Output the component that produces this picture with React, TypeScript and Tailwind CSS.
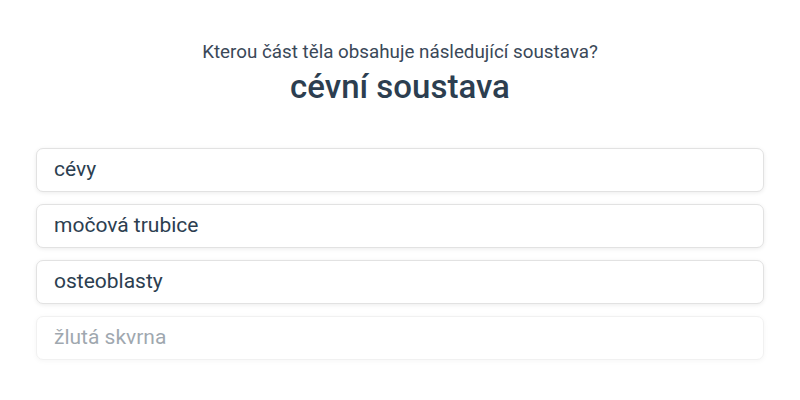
const options = ["cévy", "močová trubice", "osteoblasty", "žlutá skvrna"];

export default function App() {
  return (
    <div className="h-[400px] w-[800px] overflow-hidden bg-white font-[Roboto] text-[#3a4858]">
      <div className="flex flex-col items-center pt-[39px]">
        <p className="text-[18.8px] leading-[27px]">Kterou část těla obsahuje následující soustava?</p>
        <h1 className="mt-[1px] text-[33px] leading-[40px] font-medium text-[#2c3e50]">cévní soustava</h1>
      </div>

      <div className="mt-[41px] flex flex-col gap-[12px] px-[36px]">
        {options.map((o, i) => (
          <div
            key={o}
            className={
              i === 3
                ? "flex h-[44px] items-center rounded-[7px] border border-[#e2e2e2] bg-white px-[17px] text-[21px] text-[#2c3e50] opacity-45 shadow-[0_1px_4px_rgba(0,0,0,0.08)]"
                : "flex h-[44px] items-center rounded-[7px] border border-[#e2e2e2] bg-white px-[17px] text-[21px] text-[#2c3e50] shadow-[0_1px_4px_rgba(0,0,0,0.08)]"
            }
          >
            {o}
          </div>
        ))}
      </div>
    </div>
  );
}
